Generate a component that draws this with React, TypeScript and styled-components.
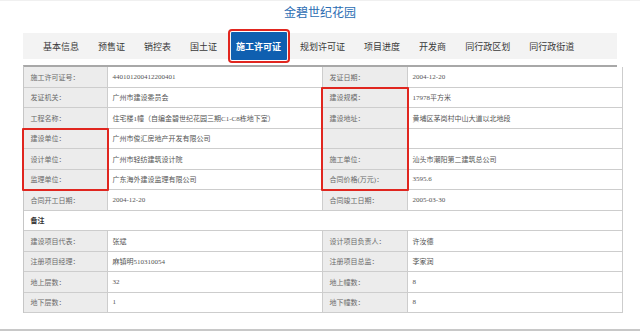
import styled, { createGlobalStyle } from "styled-components";

const GlobalStyle = createGlobalStyle`
  html, body {
    margin: 0;
    padding: 0;
    background: #ffffff;
  }

  body {
    font-family: "Liberation Serif", "Noto Sans CJK SC", serif;
  }
`;

const tabs = [
  "基本信息",
  "预售证",
  "销控表",
  "国土证",
  "施工许可证",
  "规划许可证",
  "项目进度",
  "开发商",
  "同行政区划",
  "同行政街道",
];

const activeTab = "施工许可证";

type Pair = [string, string, string, string];

const topRows: Pair[] = [
  ["施工许可证号：", "440101200412200401", "发证日期：", "2004-12-20"],
  ["发证机关：", "广州市建设委员会", "建设规模：", "17978平方米"],
  [
    "工程名称：",
    "住宅楼1幢（自编金碧世纪花园三期C1-C8栋地下室）",
    "建设地址：",
    "黄埔区茅岗村中山大道以北地段",
  ],
  ["建设单位：", "广州市俊汇房地产开发有限公司", "", ""],
  ["设计单位：", "广州市轻纺建筑设计院", "施工单位：", "汕头市潮阳第二建筑总公司"],
  ["监理单位：", "广东海外建设监理有限公司", "合同价格(万元)：", "3595.6"],
  ["合同开工日期：", "2004-12-20", "合同竣工日期：", "2005-03-30"],
];

const bottomRows: Pair[] = [
  ["建设项目代表：", "张斌", "设计项目负责人：", "许汝德"],
  ["注册项目经理：", "麻镇明510310054", "注册项目总监：", "李家润"],
  ["地上层数：", "32", "地上幢数：", "8"],
  ["地下层数：", "1", "地下幢数：", "8"],
];

// red annotation boxes drawn over the sheet
const marks = [
  { col: 1, row: 4, span: 3 },
  { col: 3, row: 2, span: 5 },
];

function PairRow({ row }: { row: Pair }) {
  return (
    <>
      <LabelCell>{row[0]}</LabelCell>
      <ValueCell>{row[1]}</ValueCell>
      <LabelCell>{row[2]}</LabelCell>
      <ValueCell>{row[3]}</ValueCell>
    </>
  );
}

export default function App() {
  return (
    <Page>
      <GlobalStyle />
      <Title>金碧世纪花园</Title>

      <NavBar>
        {tabs.map((tab) => (
          <Tab key={tab} $active={tab === activeTab}>
            {tab}
          </Tab>
        ))}
      </NavBar>

      <TableWrap>
        <Sheet>
          {topRows.map((row) => (
            <PairRow key={row[0]} row={row} />
          ))}
          <SectionCell>备注</SectionCell>
          {bottomRows.map((row) => (
            <PairRow key={row[0]} row={row} />
          ))}
        </Sheet>

        <Marks>
          {marks.map((m) => (
            <Mark key={`${m.col}-${m.row}`} $col={m.col} $row={m.row} $span={m.span} />
          ))}
        </Marks>
      </TableWrap>

      <FooterLine />
    </Page>
  );
}

const Page = styled.div`
  width: 640px;
  height: 332px;
  overflow: hidden;
  background: #ffffff;
  border-top: 1px solid #f0f0f0;
  box-sizing: border-box;
`;

const Title = styled.div`
  height: 21px;
  line-height: 21px;
  text-align: center;

  font-family: "Noto Sans CJK SC", sans-serif;
  font-size: 12px;
  color: #2c6db3;
`;

const NavBar = styled.div`
  display: flex;
  align-items: center;

  height: 26px;
  margin: 11px 23px 0;
  padding-left: 10.5px;

  background-color: #f3f3f3;
`;

const Tab = styled.div<{ $active?: boolean }>`
  display: flex;
  align-items: center;

  height: 28px;
  margin: 0 4px;
  padding: 0 5.5px;

  font-family: "Noto Sans CJK SC", sans-serif;
  font-size: 9px;
  font-weight: ${(p) => (p.$active ? 700 : 400)};
  white-space: nowrap;

  color: ${(p) => (p.$active ? "#ffffff" : "#3a3a3a")};
  background-color: ${(p) => (p.$active ? "#0f5fb0" : "transparent")};
  outline: ${(p) => (p.$active ? "2px solid #e1261f" : "none")};
  outline-offset: 1px;
  border-radius: ${(p) => (p.$active ? "1px" : "0")};
`;

const TableWrap = styled.div`
  display: grid;

  margin: 6px 23px 0;

  border-top: 2px solid #a8a8a8;
  border-left: 1px solid #c6c6c6;
`;

const gridTemplate = `
  grid-area: 1 / 1;
  display: grid;
  grid-template-columns: 84px 215px 85px 215px;
  grid-auto-rows: 20.5px;
`;

const Sheet = styled.div`
  ${gridTemplate}
`;

const Marks = styled.div`
  ${gridTemplate}
  pointer-events: none;
`;

const Mark = styled.div<{ $col: number; $row: number; $span: number }>`
  grid-column: ${(p) => p.$col};
  grid-row: ${(p) => `${p.$row} / span ${p.$span}`};

  margin: -1px -1px -1px -2px;

  border: 2px solid #e0261f;
  border-radius: 1px;
`;

const Cell = styled.div`
  display: flex;
  align-items: center;

  box-sizing: border-box;
  min-width: 0;

  border-right: 1px solid #cdcdcd;
  border-bottom: 1px solid #cdcdcd;

  font-size: 7px;
  white-space: nowrap;
  overflow: hidden;
`;

const LabelCell = styled(Cell)`
  padding-left: 6.5px;

  color: #6a6a6a;
  background-color: #ececec;
`;

const ValueCell = styled(Cell)`
  padding-left: 4.5px;

  color: #555555;
  background-color: #ffffff;
`;

const SectionCell = styled(Cell)`
  grid-column: 1 / -1;
  padding-left: 6.5px;

  font-weight: 700;
  color: #333333;
  background-color: #ffffff;
`;

const FooterLine = styled.div`
  margin-top: 16px;
  border-top: 2px solid #c8c8c8;
`;
